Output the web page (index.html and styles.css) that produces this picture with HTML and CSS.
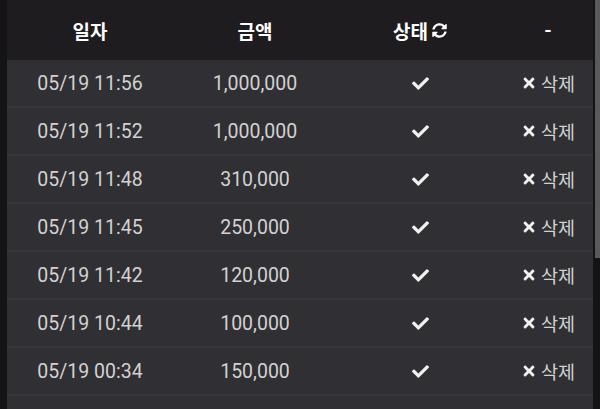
FILE: index.html
```html
<!DOCTYPE html>
<html lang="ko">
<head>
    <meta charset="UTF-8">
    <meta name="viewport" content="width=device-width, initial-scale=1.0">
    <title>입금 내역</title>
    <link rel="stylesheet" href="styles.css">
</head>
<body>
    <div class="page">
        <div class="side"></div>
        <div class="panel">
            <div class="row head">
                <div class="cell">일자</div>
                <div class="cell">금액</div>
                <div class="cell">상태
                    <svg class="icon refresh" viewBox="0 0 512 512"><path d="M370.72 133.28C339.458 104.008 298.888 87.962 255.848 88c-77.458.068-144.328 53.178-162.791 126.85-1.344 5.363-6.122 9.15-11.651 9.15H24.103c-7.498 0-13.194-6.807-11.807-14.176C33.933 94.924 134.813 8 256 8c66.448 0 126.791 26.136 171.315 68.685L463.03 40.970C478.149 25.851 504 36.559 504 57.941V192c0 13.255-10.745 24-24 24H345.941c-21.382 0-32.09-25.851-16.971-40.971l41.75-41.749zM32 296h134.059c21.382 0 32.09 25.851 16.971 40.971l-41.75 41.75c31.262 29.273 71.835 45.319 114.876 45.28 77.418-.07 144.315-53.144 162.787-126.849 1.344-5.363 6.122-9.150 11.651-9.150h57.304c7.498 0 13.194 6.807 11.807 14.176C478.067 417.076 377.187 504 256 504c-66.448 0-126.791-26.136-171.315-68.685L48.970 471.030C33.851 486.149 8 475.441 8 454.059V320c0-13.255 10.745-24 24-24z"/></svg>
                </div>
                <div class="cell">-</div>
            </div>
            <div id="rows"></div>
            <div class="row item"></div>
        </div>
        <div class="scroll"><div class="thumb"></div></div>
    </div>

    <script>
        const items = [
            ['05/19 11:56', '1,000,000'],
            ['05/19 11:52', '1,000,000'],
            ['05/19 11:48', '310,000'],
            ['05/19 11:45', '250,000'],
            ['05/19 11:42', '120,000'],
            ['05/19 10:44', '100,000'],
            ['05/19 00:34', '150,000']
        ];
        const check = '<svg class="icon check" viewBox="0 0 512 512"><path d="M173.898 439.404l-166.4-166.4c-9.997-9.997-9.997-26.206 0-36.204l36.203-36.204c9.997-9.998 26.207-9.998 36.204 0L192 312.69 432.095 72.596c9.997-9.997 26.207-9.997 36.204 0l36.203 36.204c9.997 9.997 9.997 26.206 0 36.204l-294.4 294.401c-9.998 9.997-26.207 9.997-36.204-.001z"/></svg>';
        const times = '<svg class="icon times" viewBox="0 0 352 512"><path d="M242.72 256l100.07-100.07c12.28-12.28 12.28-32.19 0-44.48l-22.24-22.24c-12.28-12.28-32.19-12.28-44.48 0L176 189.28 75.93 89.21c-12.28-12.28-32.19-12.28-44.48 0L9.21 111.45c-12.28 12.28-12.28 32.19 0 44.48L109.28 256 9.21 356.07c-12.28 12.28-12.28 32.19 0 44.48l22.24 22.24c12.28 12.28 32.2 12.28 44.48 0L176 322.72l100.07 100.07c12.28 12.28 32.2 12.28 44.48 0l22.24-22.24c12.28-12.28 12.28-32.19 0-44.48L242.72 256z"/></svg>';

        let html = '';
        items.forEach(function(item) {
            html += '<div class="row item">' +
                '<div class="cell">' + item[0] + '</div>' +
                '<div class="cell">' + item[1] + '</div>' +
                '<div class="cell">' + check + '</div>' +
                '<div class="cell del">' + times + '<span class="del-text">삭제</span></div>' +
                '</div>';
        });
        document.getElementById('rows').innerHTML = html;
    </script>
</body>
</html>
```

FILE: styles.css
```css
html, body {
    margin: 0;
    padding: 0;
    height: 100%;
    overflow: hidden;
    background: #141316;
}
body {
    font-family: Roboto, "Noto Sans CJK KR", sans-serif;
}
.page {
    display: flex;
    height: 409px;
    position: relative;
}
.side {
    width: 7px;
    background: #141316;
}
.panel {
    width: 586px;
    background: #1e1c1f;
}
.row {
    display: grid;
    grid-template-columns: 166px 164px 166px 1fr;
    align-items: center;
}
.cell {
    display: flex;
    align-items: center;
    justify-content: center;
}
.head {
    height: 60px;
    color: #ffffff;
    font-size: 19px;
    font-weight: bold;
}
.item {
    height: 46px;
    background: #302f33;
    border-bottom: 2px solid #38373b;
    color: #d2d2d2;
    font-size: 19.5px;
}
.icon {
    fill: currentColor;
}
.refresh {
    width: 15px;
    height: 15px;
    margin-left: 4px;
}
.check {
    width: 17px;
    height: 17px;
    fill: #f0f0f0;
}
.times {
    width: 12px;
    height: 16px;
    margin-right: 6px;
    fill: #f0f0f0;
}
.del {
    padding-left: 2px;
}
.del-text {
    font-size: 18.5px;
}
.scroll {
    width: 7px;
    background: #141316;
    position: relative;
}
.thumb {
    position: absolute;
    left: 2px;
    top: 0;
    width: 5px;
    height: 258px;
    background: #5a595c;
}
```
